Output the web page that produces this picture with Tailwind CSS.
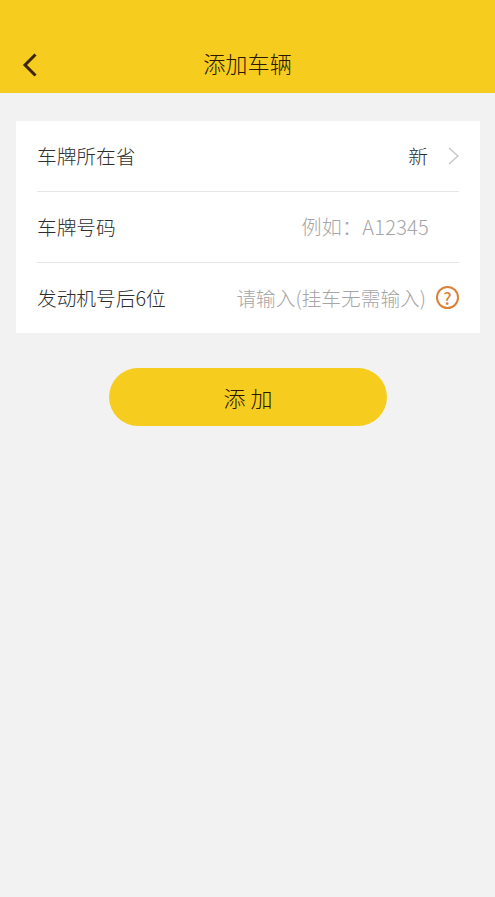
<!DOCTYPE html>
<html lang="zh">
<head>
  <meta charset="UTF-8" />
  <title>添加车辆</title>
  <script src="https://cdn.jsdelivr.net/npm/@tailwindcss/browser@4"></script>
</head>
<body class="bg-[#f3f2f3] h-[897px] overflow-hidden font-['Noto_Sans_CJK_SC','Roboto',sans-serif]">
  <!-- Header -->
  <header class="bg-[#f6cd1f] h-[93px] pt-[41px] px-[22px] relative">
    <div class="h-[48px] pb-[4px] flex items-center justify-center relative">
      <svg class="absolute left-0 top-[11px]" width="16" height="26" viewBox="0 0 16 26" fill="none">
        <path d="M13.5 2.5 L3 13 L13.5 23.5" stroke="#3d2507" stroke-width="3"/>
      </svg>
      <h1 class="text-[22.2px] leading-[44px] text-[#2a1700] font-light">添加车辆</h1>
    </div>
  </header>

  <!-- Form -->
  <section class="ml-[16px] mr-[15px] mt-[28px] bg-white px-[21px] text-[19.7px] text-[#2e2e2e] font-light">
    <div class="h-[71px] flex items-center justify-between border-b border-[#e6e6e6]">
      <span>车牌所在省</span>
      <div class="flex items-center gap-[20px]">
        <span>新</span>
        <svg width="11" height="20" viewBox="0 0 11 20" fill="none">
          <path d="M1 2 L10 10 L1 18" stroke="#c6c6c6" stroke-width="1.5"/>
        </svg>
      </div>
    </div>
    <div class="h-[71px] flex items-center justify-between border-b border-[#e6e6e6]">
      <span>车牌号码</span>
      <span class="text-[#a6a6a6] text-[20px] tracking-[0.25px] pr-[30px]">例如：A12345</span>
    </div>
    <div class="h-[70px] flex items-center justify-between">
      <span>发动机号后6位</span>
      <div class="flex items-center gap-[10px]">
        <span class="text-[#a6a6a6] text-[19.7px]">请输入(挂车无需输入)</span>
        <span class="w-[23px] h-[23px] rounded-full border-2 border-[#dc8136] text-[#dc8136] text-[17px] leading-none font-medium flex items-center justify-center">?</span>
      </div>
    </div>
  </section>

  <!-- Submit -->
  <div class="flex justify-center mt-[35px] pl-[1px]">
    <button class="w-[278px] h-[58px] rounded-full bg-[#f6cd1f] text-[22px] text-[#2a1700] font-light">添 加</button>
  </div>
</body>
</html>
